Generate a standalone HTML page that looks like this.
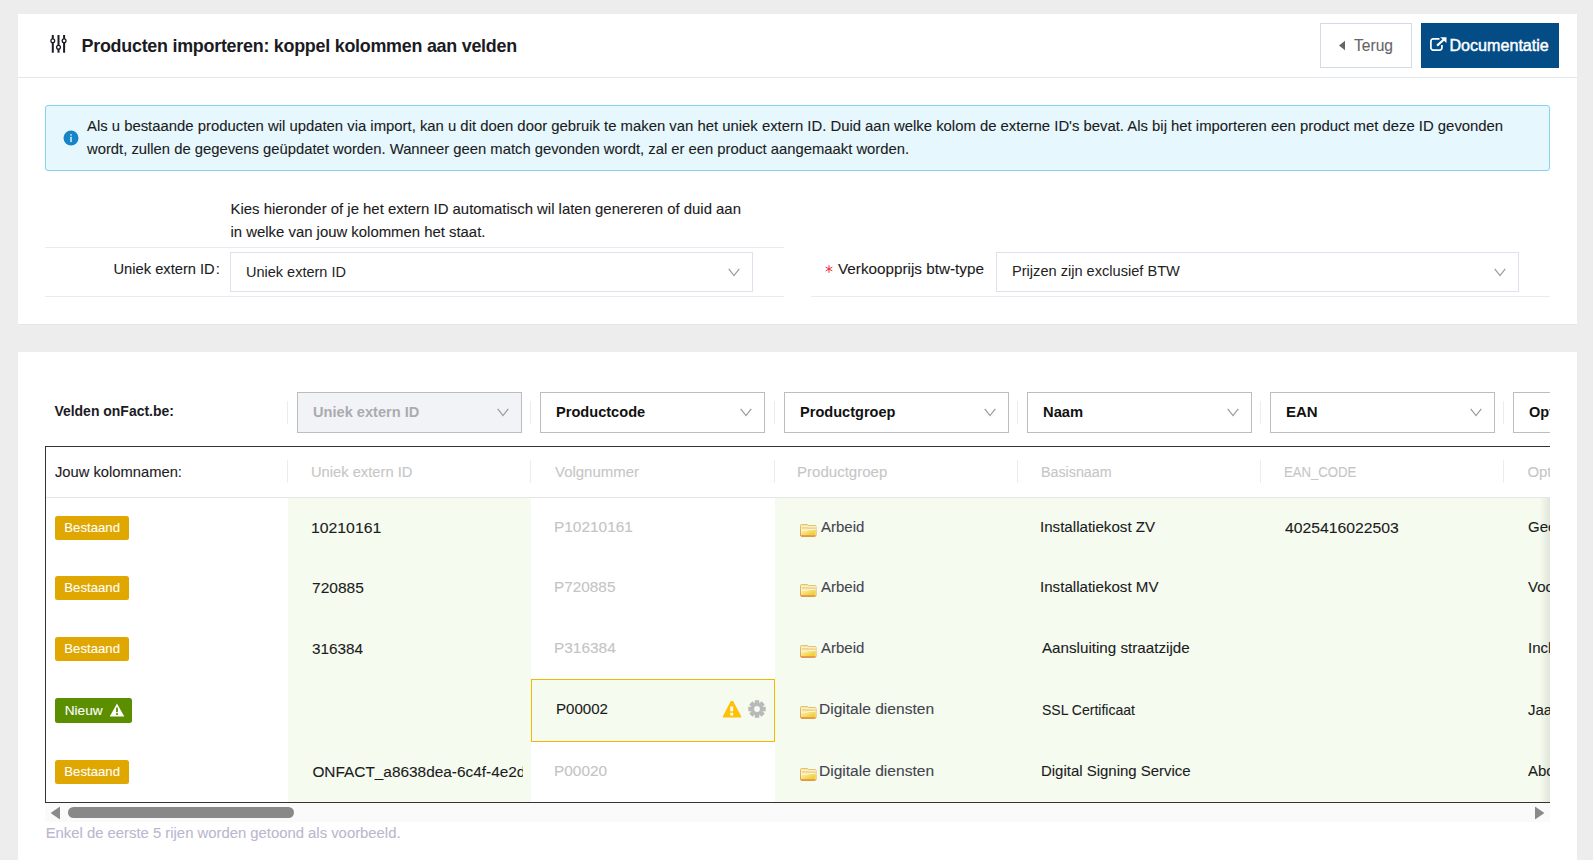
<!DOCTYPE html>
<html><head><meta charset="utf-8"><title>Producten importeren</title>
<style>
html,body{margin:0;padding:0;}
body{width:1593px;height:860px;overflow:hidden;background:#ededed;position:relative;font-family:"Liberation Sans", sans-serif;}
.t{position:absolute;white-space:pre;}
.abs{position:absolute;}
svg{display:block;}
.card{position:absolute;background:#fff;}
</style></head><body>
<div class="card" style="left:18px;top:14px;width:1559px;height:310px;border-bottom:1px solid #e2e6ee;"></div>
<div class="abs" style="left:18px;top:77px;width:1559px;height:1px;background:#e3e7ef;"></div>
<svg class="abs" style="left:46px;top:30px" width="26" height="28" viewBox="0 0 26 28">
<g stroke="#1b1b24" stroke-width="2" fill="none">
<line x1="6.8" y1="5" x2="6.8" y2="22.7"/><line x1="12.5" y1="5" x2="12.5" y2="22.7"/><line x1="18.1" y1="5" x2="18.1" y2="22.7"/>
</g>
<g stroke="#1b1b24" stroke-width="1.3" fill="#fff">
<circle cx="6.8" cy="10.7" r="1.9"/><circle cx="12.5" cy="17.3" r="1.9"/><circle cx="18.1" cy="10.7" r="1.9"/>
</g></svg>
<div class="t" style="left:81.5px;top:34.81px;font-size:17.9px;line-height:22.38px;font-weight:700;color:#1b1b24;letter-spacing:-0.25px;">Producten importeren: koppel kolommen aan velden</div>
<div class="abs" style="left:1320px;top:23px;width:90px;height:43px;border:1px solid #d3dae6;background:#fff;"></div>
<svg class="abs" style="left:1338px;top:40px" width="8" height="11" viewBox="0 0 8 11"><path d="M7 0.7 L1 5.5 L7 10.3 Z" fill="#666"/></svg>
<div class="t" style="left:1354px;top:36.34px;font-size:15.6px;line-height:19.5px;font-weight:400;color:#666;-webkit-text-stroke:0.1px #666;">Terug</div>
<div class="abs" style="left:1421px;top:23px;width:138px;height:45px;background:#034c86;"></div>
<svg class="abs" style="left:1429px;top:35px" width="20" height="17" viewBox="0 0 20 17">
<path d="M10.5 3.85 H4.2 a2.3 2.3 0 0 0 -2.3 2.3 V12.8 a2.3 2.3 0 0 0 2.3 2.3 H10.65 a2.3 2.3 0 0 0 2.3 -2.3 V10" fill="none" stroke="#fff" stroke-width="1.7"/>
<path d="M8.1 10.6 L15.2 4.3" stroke="#fff" stroke-width="2.2" fill="none"/>
<path d="M11.2 2.2 H17.5 V8.1 Z" fill="#fff"/>
</svg>
<div class="t" style="left:1449.5px;top:34.66px;font-size:16.1px;line-height:20.12px;font-weight:400;color:#fff;-webkit-text-stroke:0.45px #fff;">Documentatie</div>
<div class="abs" style="left:45px;top:105px;width:1503px;height:64px;border:1px solid #84d3ef;border-radius:3px;background:#e6f8fd;"></div>
<svg class="abs" style="left:62.5px;top:130px" width="16" height="16" viewBox="0 0 16 16"><circle cx="8" cy="8" r="7.5" fill="#1784c7"/><rect x="7.35" y="6.8" width="1.3" height="5.2" fill="#fff"/><rect x="7.35" y="4.1" width="1.3" height="1.5" fill="#fff"/></svg>
<div class="t" style="left:87px;top:116.57px;font-size:14.86px;line-height:18.57px;font-weight:400;color:#1b1b22;-webkit-text-stroke:0.1px #1b1b22;">Als u bestaande producten wil updaten via import, kan u dit doen door gebruik te maken van het uniek extern ID. Duid aan welke kolom de externe ID's bevat. Als bij het importeren een product met deze ID gevonden</div>
<div class="t" style="left:87px;top:139.82px;font-size:14.8px;line-height:18.5px;font-weight:400;color:#1b1b22;-webkit-text-stroke:0.1px #1b1b22;">wordt, zullen de gegevens geüpdatet worden. Wanneer geen match gevonden wordt, zal er een product aangemaakt worden.</div>
<div class="t" style="left:230.5px;top:199.51px;font-size:14.92px;line-height:18.65px;font-weight:400;color:#1b1b22;-webkit-text-stroke:0.1px #1b1b22;">Kies hieronder of je het extern ID automatisch wil laten genereren of duid aan</div>
<div class="t" style="left:230.5px;top:222.63px;font-size:14.9px;line-height:18.62px;font-weight:400;color:#1b1b22;-webkit-text-stroke:0.1px #1b1b22;">in welke van jouw kolommen het staat.</div>
<div class="abs" style="left:45px;top:247px;width:739px;height:1px;background:#e9ebef;"></div>
<div class="abs" style="left:45px;top:296px;width:739px;height:1px;background:#e9ebef;"></div>
<div class="abs" style="left:811px;top:296px;width:739px;height:1px;background:#e9ebef;"></div>
<div class="t" style="left:113.5px;top:259.52px;font-size:14.7px;line-height:18.38px;font-weight:400;color:#1b1b22;-webkit-text-stroke:0.1px #1b1b22;">Uniek extern ID<span style="margin-left:1px">:</span></div>
<div class="abs" style="left:230px;top:252px;width:521px;height:38px;border:1px solid #dde3ed;background:#fff;"></div>
<div class="t" style="left:246px;top:262.52px;font-size:14.5px;line-height:18.12px;font-weight:400;color:#222;-webkit-text-stroke:0;">Uniek extern ID</div>
<div class="abs" style="left:728px;top:267.5px;width:12px;height:9px;"><svg width="12" height="9" viewBox="0 0 12 9"><path d="M0.7 0.8 L6 7.6 L11.3 0.8" fill="none" stroke="#9a9a9a" stroke-width="1.2"/></svg></div>
<svg class="abs" style="left:824.5px;top:265px" width="8" height="8" viewBox="0 0 8 8"><g stroke="#ee2a36" stroke-width="1"><line x1="4" y1="0.2" x2="4" y2="7.8"/><line x1="0.7" y1="2.1" x2="7.3" y2="5.9"/><line x1="0.7" y1="5.9" x2="7.3" y2="2.1"/></g></svg>
<div class="t" style="left:838px;top:258.76px;font-size:15.27px;line-height:19.09px;font-weight:400;color:#1b1b22;-webkit-text-stroke:0.1px #1b1b22;">Verkoopprijs btw-type</div>
<div class="abs" style="left:996px;top:252px;width:521px;height:38px;border:1px solid #dde3ed;background:#fff;"></div>
<div class="t" style="left:1012px;top:262.42px;font-size:14.6px;line-height:18.25px;font-weight:400;color:#222;-webkit-text-stroke:0;">Prijzen zijn exclusief BTW</div>
<div class="abs" style="left:1494px;top:267.5px;width:12px;height:9px;"><svg width="12" height="9" viewBox="0 0 12 9"><path d="M0.7 0.8 L6 7.6 L11.3 0.8" fill="none" stroke="#9a9a9a" stroke-width="1.2"/></svg></div>
<div class="card" style="left:18px;top:352px;width:1559px;height:520px;"></div>
<div class="t" style="left:54.4px;top:403.22px;font-size:13.98px;line-height:17.48px;font-weight:700;color:#1b1b24;">Velden onFact.be:</div>
<div class="abs" style="left:0;top:380px;width:1550px;height:470px;overflow:hidden;">
<div class="abs" style="left:287px;top:21px;width:1px;height:23px;background:#ececec;"></div>
<div class="abs" style="left:297.0px;top:12.4px;width:223px;height:39px;border:1px solid #bdbdbd;background:#f2f3f7;"></div>
<div class="t" style="left:313.0px;top:23.22px;font-size:14.5px;line-height:18.12px;font-weight:700;color:#ababaf;transform:scaleX(1.0067);transform-origin:0 0;">Uniek extern ID</div>
<div class="abs" style="left:497.0px;top:28px;width:12px;height:9px;"><svg width="12" height="9" viewBox="0 0 12 9"><path d="M0.7 0.8 L6 7.6 L11.3 0.8" fill="none" stroke="#9a9a9a" stroke-width="1.2"/></svg></div>
<div class="abs" style="left:530px;top:21px;width:1px;height:23px;background:#ececec;"></div>
<div class="abs" style="left:540.0px;top:12.4px;width:223px;height:39px;border:1px solid #bdbdbd;background:#fff;"></div>
<div class="t" style="left:556.0px;top:23.22px;font-size:14.5px;line-height:18.12px;font-weight:700;color:#111;transform:scaleX(1.0061);transform-origin:0 0;">Productcode</div>
<div class="abs" style="left:740.0px;top:28px;width:12px;height:9px;"><svg width="12" height="9" viewBox="0 0 12 9"><path d="M0.7 0.8 L6 7.6 L11.3 0.8" fill="none" stroke="#9a9a9a" stroke-width="1.2"/></svg></div>
<div class="abs" style="left:774px;top:21px;width:1px;height:23px;background:#ececec;"></div>
<div class="abs" style="left:784.0px;top:12.4px;width:223px;height:39px;border:1px solid #bdbdbd;background:#fff;"></div>
<div class="t" style="left:800.0px;top:23.22px;font-size:14.5px;line-height:18.12px;font-weight:700;color:#111;transform:scaleX(1.0042);transform-origin:0 0;">Productgroep</div>
<div class="abs" style="left:984.0px;top:28px;width:12px;height:9px;"><svg width="12" height="9" viewBox="0 0 12 9"><path d="M0.7 0.8 L6 7.6 L11.3 0.8" fill="none" stroke="#9a9a9a" stroke-width="1.2"/></svg></div>
<div class="abs" style="left:1017px;top:21px;width:1px;height:23px;background:#ececec;"></div>
<div class="abs" style="left:1027.0px;top:12.4px;width:223px;height:39px;border:1px solid #bdbdbd;background:#fff;"></div>
<div class="t" style="left:1043.0px;top:23.22px;font-size:14.5px;line-height:18.12px;font-weight:700;color:#111;transform:scaleX(1.0155);transform-origin:0 0;">Naam</div>
<div class="abs" style="left:1227.0px;top:28px;width:12px;height:9px;"><svg width="12" height="9" viewBox="0 0 12 9"><path d="M0.7 0.8 L6 7.6 L11.3 0.8" fill="none" stroke="#9a9a9a" stroke-width="1.2"/></svg></div>
<div class="abs" style="left:1260px;top:21px;width:1px;height:23px;background:#ececec;"></div>
<div class="abs" style="left:1270.0px;top:12.4px;width:223px;height:39px;border:1px solid #bdbdbd;background:#fff;"></div>
<div class="t" style="left:1286.0px;top:23.22px;font-size:14.5px;line-height:18.12px;font-weight:700;color:#111;transform:scaleX(1.0351);transform-origin:0 0;">EAN</div>
<div class="abs" style="left:1470.0px;top:28px;width:12px;height:9px;"><svg width="12" height="9" viewBox="0 0 12 9"><path d="M0.7 0.8 L6 7.6 L11.3 0.8" fill="none" stroke="#9a9a9a" stroke-width="1.2"/></svg></div>
<div class="abs" style="left:1503px;top:21px;width:1px;height:23px;background:#ececec;"></div>
<div class="abs" style="left:1513.0px;top:12.4px;width:223px;height:39px;border:1px solid #bdbdbd;background:#fff;"></div>
<div class="t" style="left:1529px;top:23.22px;font-size:14.5px;line-height:18.12px;font-weight:700;color:#111;">Optie</div>
<div class="abs" style="left:1713.0px;top:28px;width:12px;height:9px;"><svg width="12" height="9" viewBox="0 0 12 9"><path d="M0.7 0.8 L6 7.6 L11.3 0.8" fill="none" stroke="#9a9a9a" stroke-width="1.2"/></svg></div>
</div>
<div class="abs" style="left:45px;top:446px;width:1505px;height:377px;overflow:hidden;">
<div class="abs" style="left:0;top:0;width:1505px;height:1px;background:#333;"></div>
<div class="abs" style="left:0;top:0;width:1px;height:357px;background:#333;"></div>
<div class="abs" style="left:0;top:356px;width:1505px;height:1px;background:#333;"></div>
<div class="abs" style="left:1px;top:51px;width:1504px;height:1px;background:#e6e6e6;"></div>
<div class="abs" style="left:243px;top:52px;width:243px;height:304px;background:#f5fbef;"></div>
<div class="abs" style="left:730px;top:52px;width:800px;height:304px;background:#f5fbef;"></div>
<div class="t" style="left:10px;top:16.68px;font-size:14.74px;line-height:18.43px;font-weight:400;color:#1b1b22;-webkit-text-stroke:0.1px #1b1b22;">Jouw kolomnamen:</div>
<div class="abs" style="left:242px;top:14px;width:1px;height:23px;background:#ececec;"></div>
<div class="t" style="left:265.5124359060585px;top:16.53px;font-size:14.9px;line-height:18.62px;font-weight:400;color:#c6c6c6;-webkit-text-stroke:0.1px #c6c6c6;transform:scaleX(0.9876);transform-origin:0 0;">Uniek extern ID</div>
<div class="abs" style="left:485px;top:14px;width:1px;height:23px;background:#ececec;"></div>
<div class="t" style="left:509.5px;top:16.53px;font-size:14.9px;line-height:18.62px;font-weight:400;color:#c6c6c6;-webkit-text-stroke:0.1px #c6c6c6;transform:scaleX(1.0044);transform-origin:0 0;">Volgnummer</div>
<div class="abs" style="left:729px;top:14px;width:1px;height:23px;background:#ececec;"></div>
<div class="t" style="left:752.4900195080022px;top:16.53px;font-size:14.9px;line-height:18.62px;font-weight:400;color:#c6c6c6;-webkit-text-stroke:0.1px #c6c6c6;transform:scaleX(1.0100);transform-origin:0 0;">Productgroep</div>
<div class="abs" style="left:972px;top:14px;width:1px;height:23px;background:#ececec;"></div>
<div class="t" style="left:995.5409185601841px;top:16.53px;font-size:14.9px;line-height:18.62px;font-weight:400;color:#c6c6c6;-webkit-text-stroke:0.1px #c6c6c6;transform:scaleX(0.9591);transform-origin:0 0;">Basisnaam</div>
<div class="abs" style="left:1215px;top:14px;width:1px;height:23px;background:#ececec;"></div>
<div class="t" style="left:1238.6183918014233px;top:16.53px;font-size:14.9px;line-height:18.62px;font-weight:400;color:#c6c6c6;-webkit-text-stroke:0.1px #c6c6c6;transform:scaleX(0.8816);transform-origin:0 0;">EAN_CODE</div>
<div class="abs" style="left:1458px;top:14px;width:1px;height:23px;background:#ececec;"></div>
<div class="t" style="left:1482.5px;top:16.53px;font-size:14.9px;line-height:18.62px;font-weight:400;color:#c6c6c6;-webkit-text-stroke:0.1px #c6c6c6;">Optie</div>
<div class="abs" style="left:10px;top:70.0px;width:74px;height:24px;border-radius:2.5px;background:#e0a700;"></div>
<div class="t" style="left:19.299999999999997px;top:73.99px;font-size:13.18px;line-height:16.48px;font-weight:400;color:#fff;-webkit-text-stroke:0.1px #fff;">Bestaand</div>
<div class="abs" style="left:242.7px;top:52px;width:235px;height:60.5px;overflow:hidden;"><div class="t" style="left:23.674846048006835px;top:19.84px;font-size:15.4px;line-height:19.25px;font-weight:400;color:#1b1b22;-webkit-text-stroke:0.1px #1b1b22;transform:scaleX(1.0252);transform-origin:0 0;">10210161</div>
</div>
<div class="t" style="left:509.480828939334px;top:72.08px;font-size:15.15px;line-height:18.94px;font-weight:400;color:#c4c4c4;-webkit-text-stroke:0.1px #c4c4c4;transform:scaleX(1.0192);transform-origin:0 0;">P10210161</div>
<div class="abs" style="left:755px;top:77.8px;width:17px;height:14px;"><svg width="17" height="14" viewBox="0 0 17 14"><defs>
<linearGradient id="fb" x1="0" y1="0" x2="0" y2="1"><stop offset="0" stop-color="#e0c46c"/><stop offset="1" stop-color="#e3984c"/></linearGradient>
<linearGradient id="fg" x1="0" y1="0" x2="1" y2="1"><stop offset="0" stop-color="#fcf3c8"/><stop offset="0.75" stop-color="#f2d232"/><stop offset="1" stop-color="#f0cf50"/></linearGradient></defs>
<path d="M0.5 1.5 Q0.5 0.5 1.5 0.5 H7.6 L8.4 1.5 H15 Q16 1.5 16 2.5 V11 Q16 12.5 14.5 12.5 H2 Q0.5 12.5 0.5 11 Z" fill="#f6e3a0" stroke="url(#fb)" stroke-width="1"/>
<rect x="1.5" y="2.3" width="13.5" height="9" fill="none" stroke="#fff8e0" stroke-width="0.7"/>
<path d="M1.6 3.8 H7.5 L8.5 4.4 H14.8" stroke="#ecd089" stroke-width="1.1" fill="none"/>
<path d="M1.3 6.3 H7 Q8 6.3 8.6 5.6 H15.2 V11.2 H1.3 Z" fill="url(#fg)"/>
<path d="M1.3 6.1 H7 Q8 6.1 8.6 5.4 H15.2" stroke="#fffbea" stroke-width="0.9" fill="none"/>
<path d="M1 11.6 H15.5" stroke="#e3984c" stroke-width="1"/>
</svg></div>
<div class="t" style="left:775.5px;top:72.13px;font-size:15.1px;line-height:18.88px;font-weight:400;color:#444450;-webkit-text-stroke:0.1px #444450;transform:scaleX(0.9922);transform-origin:0 0;">Arbeid</div>
<div class="t" style="left:995.4921294618981px;top:72.23px;font-size:15.0px;line-height:18.75px;font-weight:400;color:#1b1b22;-webkit-text-stroke:0.1px #1b1b22;transform:scaleX(1.0079);transform-origin:0 0;">Installatiekost ZV</div>
<div class="t" style="left:1239.7px;top:71.94px;font-size:15.3px;line-height:19.12px;font-weight:400;color:#1b1b22;-webkit-text-stroke:0.1px #1b1b22;transform:scaleX(1.0292);transform-origin:0 0;">4025416022503</div>
<div class="t" style="left:1483px;top:72.23px;font-size:15.0px;line-height:18.75px;font-weight:400;color:#1b1b22;-webkit-text-stroke:0.1px #1b1b22;">Geen</div>
<div class="abs" style="left:10px;top:130.4px;width:74px;height:24px;border-radius:2.5px;background:#e0a700;"></div>
<div class="t" style="left:19.299999999999997px;top:133.99px;font-size:13.18px;line-height:16.48px;font-weight:400;color:#fff;-webkit-text-stroke:0.1px #fff;">Bestaand</div>
<div class="abs" style="left:242.7px;top:112.5px;width:235px;height:60.5px;overflow:hidden;"><div class="t" style="left:24.69999999999999px;top:19.34px;font-size:15.4px;line-height:19.25px;font-weight:400;color:#1b1b22;-webkit-text-stroke:0.1px #1b1b22;transform:scaleX(1.0099);transform-origin:0 0;">720885</div>
</div>
<div class="t" style="left:509.4865068100002px;top:132.08px;font-size:15.15px;line-height:18.94px;font-weight:400;color:#c4c4c4;-webkit-text-stroke:0.1px #c4c4c4;transform:scaleX(1.0135);transform-origin:0 0;">P720885</div>
<div class="abs" style="left:755px;top:137.8px;width:17px;height:14px;"><svg width="17" height="14" viewBox="0 0 17 14"><defs>
<linearGradient id="fb" x1="0" y1="0" x2="0" y2="1"><stop offset="0" stop-color="#e0c46c"/><stop offset="1" stop-color="#e3984c"/></linearGradient>
<linearGradient id="fg" x1="0" y1="0" x2="1" y2="1"><stop offset="0" stop-color="#fcf3c8"/><stop offset="0.75" stop-color="#f2d232"/><stop offset="1" stop-color="#f0cf50"/></linearGradient></defs>
<path d="M0.5 1.5 Q0.5 0.5 1.5 0.5 H7.6 L8.4 1.5 H15 Q16 1.5 16 2.5 V11 Q16 12.5 14.5 12.5 H2 Q0.5 12.5 0.5 11 Z" fill="#f6e3a0" stroke="url(#fb)" stroke-width="1"/>
<rect x="1.5" y="2.3" width="13.5" height="9" fill="none" stroke="#fff8e0" stroke-width="0.7"/>
<path d="M1.6 3.8 H7.5 L8.5 4.4 H14.8" stroke="#ecd089" stroke-width="1.1" fill="none"/>
<path d="M1.3 6.3 H7 Q8 6.3 8.6 5.6 H15.2 V11.2 H1.3 Z" fill="url(#fg)"/>
<path d="M1.3 6.1 H7 Q8 6.1 8.6 5.4 H15.2" stroke="#fffbea" stroke-width="0.9" fill="none"/>
<path d="M1 11.6 H15.5" stroke="#e3984c" stroke-width="1"/>
</svg></div>
<div class="t" style="left:775.5px;top:132.13px;font-size:15.1px;line-height:18.88px;font-weight:400;color:#444450;-webkit-text-stroke:0.1px #444450;transform:scaleX(0.9922);transform-origin:0 0;">Arbeid</div>
<div class="t" style="left:995.4917754957537px;top:132.23px;font-size:15.0px;line-height:18.75px;font-weight:400;color:#1b1b22;-webkit-text-stroke:0.1px #1b1b22;transform:scaleX(1.0082);transform-origin:0 0;">Installatiekost MV</div>
<div class="t" style="left:1483px;top:132.23px;font-size:15.0px;line-height:18.75px;font-weight:400;color:#1b1b22;-webkit-text-stroke:0.1px #1b1b22;">Voor</div>
<div class="abs" style="left:10px;top:191.0px;width:74px;height:24px;border-radius:2.5px;background:#e0a700;"></div>
<div class="t" style="left:19.299999999999997px;top:195.09px;font-size:13.18px;line-height:16.48px;font-weight:400;color:#fff;-webkit-text-stroke:0.1px #fff;">Bestaand</div>
<div class="abs" style="left:242.7px;top:173px;width:235px;height:60.5px;overflow:hidden;"><div class="t" style="left:24.69999999999999px;top:19.94px;font-size:15.4px;line-height:19.25px;font-weight:400;color:#1b1b22;-webkit-text-stroke:0.1px #1b1b22;transform:scaleX(0.9943);transform-origin:0 0;">316384</div>
</div>
<div class="t" style="left:509.48143934405016px;top:193.18px;font-size:15.15px;line-height:18.94px;font-weight:400;color:#c4c4c4;-webkit-text-stroke:0.1px #c4c4c4;transform:scaleX(1.0186);transform-origin:0 0;">P316384</div>
<div class="abs" style="left:755px;top:198.9px;width:17px;height:14px;"><svg width="17" height="14" viewBox="0 0 17 14"><defs>
<linearGradient id="fb" x1="0" y1="0" x2="0" y2="1"><stop offset="0" stop-color="#e0c46c"/><stop offset="1" stop-color="#e3984c"/></linearGradient>
<linearGradient id="fg" x1="0" y1="0" x2="1" y2="1"><stop offset="0" stop-color="#fcf3c8"/><stop offset="0.75" stop-color="#f2d232"/><stop offset="1" stop-color="#f0cf50"/></linearGradient></defs>
<path d="M0.5 1.5 Q0.5 0.5 1.5 0.5 H7.6 L8.4 1.5 H15 Q16 1.5 16 2.5 V11 Q16 12.5 14.5 12.5 H2 Q0.5 12.5 0.5 11 Z" fill="#f6e3a0" stroke="url(#fb)" stroke-width="1"/>
<rect x="1.5" y="2.3" width="13.5" height="9" fill="none" stroke="#fff8e0" stroke-width="0.7"/>
<path d="M1.6 3.8 H7.5 L8.5 4.4 H14.8" stroke="#ecd089" stroke-width="1.1" fill="none"/>
<path d="M1.3 6.3 H7 Q8 6.3 8.6 5.6 H15.2 V11.2 H1.3 Z" fill="url(#fg)"/>
<path d="M1.3 6.1 H7 Q8 6.1 8.6 5.4 H15.2" stroke="#fffbea" stroke-width="0.9" fill="none"/>
<path d="M1 11.6 H15.5" stroke="#e3984c" stroke-width="1"/>
</svg></div>
<div class="t" style="left:775.5px;top:193.23px;font-size:15.1px;line-height:18.88px;font-weight:400;color:#444450;-webkit-text-stroke:0.1px #444450;transform:scaleX(0.9922);transform-origin:0 0;">Arbeid</div>
<div class="t" style="left:996.5px;top:193.33px;font-size:15.0px;line-height:18.75px;font-weight:400;color:#1b1b22;-webkit-text-stroke:0.1px #1b1b22;transform:scaleX(1.0119);transform-origin:0 0;">Aansluiting straatzijde</div>
<div class="t" style="left:1483px;top:193.33px;font-size:15.0px;line-height:18.75px;font-weight:400;color:#1b1b22;-webkit-text-stroke:0.1px #1b1b22;">Incl</div>
<div class="abs" style="left:10px;top:252.0px;width:77px;height:25px;border-radius:2.5px;background:#5b8f00;"></div>
<div class="t" style="left:19.700000000000003px;top:255.82px;font-size:13.67px;line-height:17.09px;font-weight:400;color:#fff;-webkit-text-stroke:0.1px #fff;">Nieuw</div>
<svg class="abs" style="left:64px;top:257.0px" width="16" height="14" viewBox="0 0 16 14"><path d="M8 0.5 L15.3 13.5 H0.7 Z" fill="#fff"/><rect x="7.1" y="4.6" width="1.8" height="4.6" fill="#5b8f00"/><rect x="7.1" y="10.2" width="1.8" height="1.8" fill="#5b8f00"/></svg>
<div class="abs" style="left:486px;top:233px;width:242px;height:61px;border:1px solid #f5b800;background:#f5fbef;"></div>
<div class="t" style="left:511.00355815253954px;top:254.38px;font-size:15.15px;line-height:18.94px;font-weight:400;color:#1b1b22;-webkit-text-stroke:0.1px #1b1b22;transform:scaleX(0.9964);transform-origin:0 0;">P00002</div>
<svg class="abs" style="left:677px;top:253.5px" width="20" height="18" viewBox="0 0 20 18"><path d="M9.75 1.2 Q10.5 0.4 11.2 1.3 L19.2 16.2 Q19.6 17.5 18.4 17.5 H1.6 Q0.4 17.5 0.9 16.2 L8.6 1.3 Q9 0.8 9.75 1.2 Z" fill="#ffc107"/><rect x="8.3" y="6.5" width="2.8" height="4.8" fill="#fff"/><rect x="8.3" y="12.8" width="2.8" height="2.7" fill="#fff"/></svg>
<svg class="abs" style="left:702.3px;top:252.8px" width="20" height="20" viewBox="0 0 20 20"><path fill="#b9b9b9" fill-rule="evenodd" d="M7.75 4.12L7.75 1.30L12.25 1.30L12.25 4.12A6.3 6.3 0 0 1 12.57 4.25L14.56 2.26L17.74 5.44L15.75 7.43A6.3 6.3 0 0 1 15.88 7.75L18.70 7.75L18.70 12.25L15.88 12.25A6.3 6.3 0 0 1 15.75 12.57L17.74 14.56L14.56 17.74L12.57 15.75A6.3 6.3 0 0 1 12.25 15.88L12.25 18.70L7.75 18.70L7.75 15.88A6.3 6.3 0 0 1 7.43 15.75L5.44 17.74L2.26 14.56L4.25 12.57A6.3 6.3 0 0 1 4.12 12.25L1.30 12.25L1.30 7.75L4.12 7.75A6.3 6.3 0 0 1 4.25 7.43L2.26 5.44L5.44 2.26L7.43 4.25A6.3 6.3 0 0 1 7.75 4.12ZM12.9 10A2.9 2.9 0 1 0 7.1 10A2.9 2.9 0 1 0 12.9 10Z"/></svg>
<div class="abs" style="left:755px;top:260.1px;width:17px;height:14px;"><svg width="17" height="14" viewBox="0 0 17 14"><defs>
<linearGradient id="fb" x1="0" y1="0" x2="0" y2="1"><stop offset="0" stop-color="#e0c46c"/><stop offset="1" stop-color="#e3984c"/></linearGradient>
<linearGradient id="fg" x1="0" y1="0" x2="1" y2="1"><stop offset="0" stop-color="#fcf3c8"/><stop offset="0.75" stop-color="#f2d232"/><stop offset="1" stop-color="#f0cf50"/></linearGradient></defs>
<path d="M0.5 1.5 Q0.5 0.5 1.5 0.5 H7.6 L8.4 1.5 H15 Q16 1.5 16 2.5 V11 Q16 12.5 14.5 12.5 H2 Q0.5 12.5 0.5 11 Z" fill="#f6e3a0" stroke="url(#fb)" stroke-width="1"/>
<rect x="1.5" y="2.3" width="13.5" height="9" fill="none" stroke="#fff8e0" stroke-width="0.7"/>
<path d="M1.6 3.8 H7.5 L8.5 4.4 H14.8" stroke="#ecd089" stroke-width="1.1" fill="none"/>
<path d="M1.3 6.3 H7 Q8 6.3 8.6 5.6 H15.2 V11.2 H1.3 Z" fill="url(#fg)"/>
<path d="M1.3 6.1 H7 Q8 6.1 8.6 5.4 H15.2" stroke="#fffbea" stroke-width="0.9" fill="none"/>
<path d="M1 11.6 H15.5" stroke="#e3984c" stroke-width="1"/>
</svg></div>
<div class="t" style="left:774.469166103242px;top:254.43px;font-size:15.1px;line-height:18.88px;font-weight:400;color:#444450;-webkit-text-stroke:0.1px #444450;transform:scaleX(1.0308);transform-origin:0 0;">Digitale diensten</div>
<div class="t" style="left:996.5px;top:254.53px;font-size:15.0px;line-height:18.75px;font-weight:400;color:#1b1b22;-webkit-text-stroke:0.1px #1b1b22;transform:scaleX(0.9338);transform-origin:0 0;">SSL Certificaat</div>
<div class="t" style="left:1483px;top:254.53px;font-size:15.0px;line-height:18.75px;font-weight:400;color:#1b1b22;-webkit-text-stroke:0.1px #1b1b22;">Jaar</div>
<div class="abs" style="left:10px;top:314.0px;width:74px;height:24px;border-radius:2.5px;background:#e0a700;"></div>
<div class="t" style="left:19.299999999999997px;top:318.19px;font-size:13.18px;line-height:16.48px;font-weight:400;color:#fff;-webkit-text-stroke:0.1px #fff;">Bestaand</div>
<div class="abs" style="left:242.7px;top:295px;width:235px;height:60.5px;overflow:hidden;"><div class="t" style="left:24.69999999999999px;top:21.04px;font-size:15.4px;line-height:19.25px;font-weight:400;color:#1b1b22;-webkit-text-stroke:0.1px #1b1b22;">ONFACT_a8638dea-6c4f-4e2d-9</div>
</div>
<div class="t" style="left:509.4818963732469px;top:316.28px;font-size:15.15px;line-height:18.94px;font-weight:400;color:#c4c4c4;-webkit-text-stroke:0.1px #c4c4c4;transform:scaleX(1.0181);transform-origin:0 0;">P00020</div>
<div class="abs" style="left:755px;top:322.0px;width:17px;height:14px;"><svg width="17" height="14" viewBox="0 0 17 14"><defs>
<linearGradient id="fb" x1="0" y1="0" x2="0" y2="1"><stop offset="0" stop-color="#e0c46c"/><stop offset="1" stop-color="#e3984c"/></linearGradient>
<linearGradient id="fg" x1="0" y1="0" x2="1" y2="1"><stop offset="0" stop-color="#fcf3c8"/><stop offset="0.75" stop-color="#f2d232"/><stop offset="1" stop-color="#f0cf50"/></linearGradient></defs>
<path d="M0.5 1.5 Q0.5 0.5 1.5 0.5 H7.6 L8.4 1.5 H15 Q16 1.5 16 2.5 V11 Q16 12.5 14.5 12.5 H2 Q0.5 12.5 0.5 11 Z" fill="#f6e3a0" stroke="url(#fb)" stroke-width="1"/>
<rect x="1.5" y="2.3" width="13.5" height="9" fill="none" stroke="#fff8e0" stroke-width="0.7"/>
<path d="M1.6 3.8 H7.5 L8.5 4.4 H14.8" stroke="#ecd089" stroke-width="1.1" fill="none"/>
<path d="M1.3 6.3 H7 Q8 6.3 8.6 5.6 H15.2 V11.2 H1.3 Z" fill="url(#fg)"/>
<path d="M1.3 6.1 H7 Q8 6.1 8.6 5.4 H15.2" stroke="#fffbea" stroke-width="0.9" fill="none"/>
<path d="M1 11.6 H15.5" stroke="#e3984c" stroke-width="1"/>
</svg></div>
<div class="t" style="left:774.469166103242px;top:316.33px;font-size:15.1px;line-height:18.88px;font-weight:400;color:#444450;-webkit-text-stroke:0.1px #444450;transform:scaleX(1.0308);transform-origin:0 0;">Digitale diensten</div>
<div class="t" style="left:995.5028975610717px;top:316.43px;font-size:15.0px;line-height:18.75px;font-weight:400;color:#1b1b22;-webkit-text-stroke:0.1px #1b1b22;transform:scaleX(0.9971);transform-origin:0 0;">Digital Signing Service</div>
<div class="t" style="left:1483px;top:316.43px;font-size:15.0px;line-height:18.75px;font-weight:400;color:#1b1b22;-webkit-text-stroke:0.1px #1b1b22;">Abo</div>
<div class="abs" style="left:1495px;top:52px;width:10px;height:304px;background:linear-gradient(to right, rgba(30,40,30,0), rgba(30,40,30,0.1));"></div>
<div class="abs" style="left:0;top:357px;width:1505px;height:19px;background:#fafafa;"></div>
<svg class="abs" style="left:5px;top:360px" width="11" height="14" viewBox="0 0 11 14"><path d="M10 1.2 V12.8 Q10 13.6 9.3 13.1 L1.3 7.6 Q0.6 7 1.3 6.4 L9.3 0.9 Q10 0.4 10 1.2Z" fill="#8a8a8a"/></svg>
<div class="abs" style="left:23px;top:361px;width:226px;height:11px;border-radius:6px;background:#888;"></div>
<svg class="abs" style="left:1489px;top:360px" width="11" height="14" viewBox="0 0 11 14"><path d="M1 1.2 V12.8 Q1 13.6 1.7 13.1 L9.7 7.6 Q10.4 7 9.7 6.4 L1.7 0.9 Q1 0.4 1 1.2Z" fill="#8a8a8a"/></svg>
</div>
<div class="t" style="left:45.7px;top:823.57px;font-size:14.85px;line-height:18.56px;font-weight:400;color:#bab7cf;-webkit-text-stroke:0.1px #bab7cf;">Enkel de eerste 5 rijen worden getoond als voorbeeld.</div>
</body></html>
